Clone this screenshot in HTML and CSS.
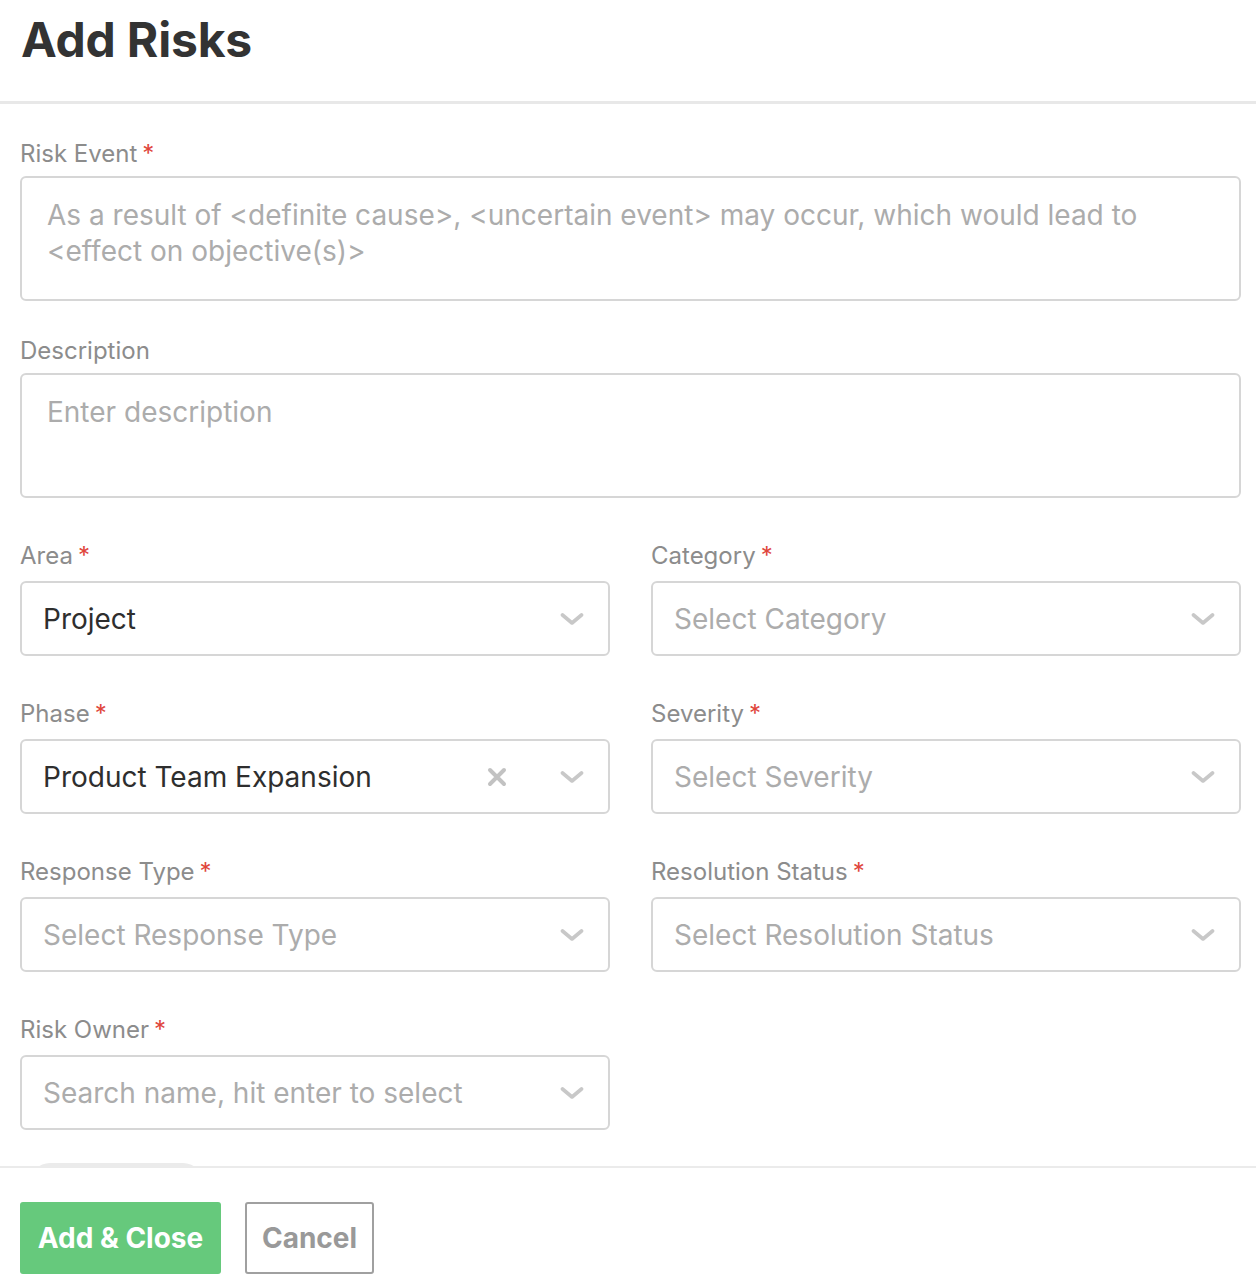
FILE: index.html
```html
<!DOCTYPE html>
<html lang="en">
<head>
<meta charset="utf-8">
<title>Add Risks</title>
<link rel="stylesheet" href="styles.css">
</head>
<body>
<div class="modal">
  <header class="modal-header">
    <h1 class="title">Add Risks</h1>
  </header>
  <main class="modal-body">
    <div class="field">
      <label class="label">Risk Event<span class="req">*</span></label>
      <textarea class="textarea" placeholder="As a result of <definite cause>, <uncertain event> may occur, which would lead to <effect on objective(s)>"></textarea>
    </div>
    <div class="field">
      <label class="label">Description</label>
      <textarea class="textarea" placeholder="Enter description"></textarea>
    </div>
    <div class="grid">
      <div class="field">
        <label class="label">Area<span class="req">*</span></label>
        <div class="select">
          <span class="value">Project</span>
          <svg class="chev" viewBox="0 0 24 24"><path d="M2.5 8l9.5 8 9.5-8"/></svg>
        </div>
      </div>
      <div class="field">
        <label class="label">Category<span class="req">*</span></label>
        <div class="select">
          <span class="placeholder">Select Category</span>
          <svg class="chev" viewBox="0 0 24 24"><path d="M2.5 8l9.5 8 9.5-8"/></svg>
        </div>
      </div>
      <div class="field">
        <label class="label">Phase<span class="req">*</span></label>
        <div class="select">
          <span class="value">Product Team Expansion</span>
          <svg class="clear" viewBox="0 0 20 20"><path d="M3 3l14 14M17 3L3 17"/></svg>
          <svg class="chev" viewBox="0 0 24 24"><path d="M2.5 8l9.5 8 9.5-8"/></svg>
        </div>
      </div>
      <div class="field">
        <label class="label">Severity<span class="req">*</span></label>
        <div class="select">
          <span class="placeholder">Select Severity</span>
          <svg class="chev" viewBox="0 0 24 24"><path d="M2.5 8l9.5 8 9.5-8"/></svg>
        </div>
      </div>
      <div class="field">
        <label class="label">Response Type<span class="req">*</span></label>
        <div class="select">
          <span class="placeholder">Select Response Type</span>
          <svg class="chev" viewBox="0 0 24 24"><path d="M2.5 8l9.5 8 9.5-8"/></svg>
        </div>
      </div>
      <div class="field">
        <label class="label">Resolution Status<span class="req">*</span></label>
        <div class="select">
          <span class="placeholder">Select Resolution Status</span>
          <svg class="chev" viewBox="0 0 24 24"><path d="M2.5 8l9.5 8 9.5-8"/></svg>
        </div>
      </div>
      <div class="field">
        <label class="label">Risk Owner<span class="req">*</span></label>
        <div class="select">
          <span class="placeholder">Search name, hit enter to select</span>
          <svg class="chev" viewBox="0 0 24 24"><path d="M2.5 8l9.5 8 9.5-8"/></svg>
        </div>
      </div>
    </div>
    <div class="pill"></div>
  </main>
  <footer class="modal-footer">
    <button class="btn btn-primary">Add &amp; Close</button>
    <button class="btn btn-secondary">Cancel</button>
  </footer>
</div>
</body>
</html>
```

FILE: styles.css
```css
* { box-sizing: border-box; }
html, body { margin: 0; padding: 0; background: #fff; }
body { font-family: Inter, "Noto Sans", sans-serif; color: #333; }

.modal {
  display: flex;
  flex-direction: column;
  height: 1284px;
  width: 1256px;
  overflow: hidden;
}

.modal-header {
  height: 104px;
  flex: none;
  border-bottom: 3px solid #e8e8e8;
  padding: 0 21px;
}
.title {
  margin: 0;
  font-size: 48px;
  line-height: 80px;
  font-weight: 700;
  color: #333;
  letter-spacing: -0.2px;
}

.modal-body {
  flex: 1;
  overflow: hidden;
  padding: 36px 15px 0 20px;
}

.field { display: flex; flex-direction: column; }
.field + .field { margin-top: 36px; }

.label {
  font-size: 24px;
  line-height: 28px;
  color: #8c8c8c;
  margin-bottom: 8px;
}
.req { color: #e0463c; margin-left: 5px; }

.textarea {
  display: block;
  width: 100%;
  height: 125px;
  border: 2px solid #d6d6d6;
  border-radius: 6px;
  padding: 19px 25px;
  font-family: Inter, "Noto Sans", sans-serif;
  font-size: 28px;
  line-height: 36px;
  color: #333;
  resize: none;
  outline: none;
  background: #fff;
}
.textarea::placeholder { color: #acacac; }

.grid {
  display: grid;
  grid-template-columns: 1fr 1fr;
  column-gap: 41px;
  row-gap: 44px;
  margin-top: 44px;
}
.grid .field + .field { margin-top: 0; }
.grid .label { margin-bottom: 11px; }

.select {
  height: 75px;
  border: 2px solid #d6d6d6;
  border-radius: 6px;
  display: flex;
  align-items: center;
  padding: 0 24px 0 21px;
}
.value, .placeholder {
  flex: 1;
  font-size: 28px;
  line-height: 36px;
  white-space: nowrap;
}
.value { color: #2e2e2e; }
.placeholder { color: #acacac; }

.chev {
  width: 24px;
  height: 24px;
  flex: none;
  fill: none;
  stroke: #c8c8c8;
  stroke-width: 3.6;
  stroke-linecap: round;
  stroke-linejoin: round;
}
.clear {
  width: 20px;
  height: 20px;
  flex: none;
  margin-right: 53px;
  fill: none;
  stroke: #c2c2c2;
  stroke-width: 4;
  stroke-linecap: round;
}

.pill {
  margin: 33px 0 0 10px;
  width: 173px;
  height: 44px;
  border-radius: 20px;
  background: #ebebeb;
}

.modal-footer {
  flex: none;
  height: 118px;
  border-top: 2px solid #ebebeb;
  padding: 34px 20px 0 20px;
  display: flex;
  gap: 24px;
  align-items: flex-start;
  background: #fff;
}
.btn {
  height: 72px;
  font-family: Inter, "Noto Sans", sans-serif;
  font-size: 28px;
  font-weight: 700;
  border-radius: 3px;
  cursor: pointer;
}
.btn-primary {
  width: 201px;
  background: #66c97c;
  color: #fff;
  border: none;
}
.btn-secondary {
  width: 129px;
  background: #fff;
  color: #999;
  border: 2px solid #a0a0a0;
}
```
